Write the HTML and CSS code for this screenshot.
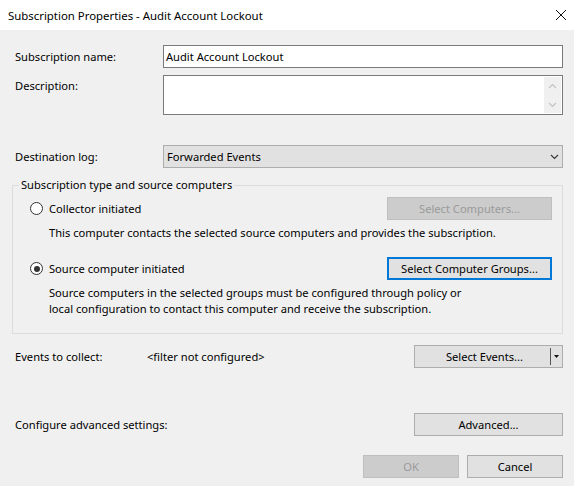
FILE: index.html
```html
<!DOCTYPE html>
<html>
<head>
<meta charset="utf-8">
<link rel="stylesheet" href="styles.css">
</head>
<body>
<div class="dialog">
  <div class="titlebar">
    <span class="title">Subscription Properties - Audit Account Lockout</span>
    <svg class="close" width="12" height="12" viewBox="0 0 12 12"><path d="M1 1 L11 11 M11 1 L1 11" stroke="#111" stroke-width="1" fill="none"/></svg>
  </div>
  <div class="content">
    <div class="row row-name">
      <span class="lbl">Subscription name:</span>
      <div class="textbox">Audit Account Lockout</div>
    </div>
    <div class="row row-desc">
      <span class="lbl">Description:</span>
      <div class="textarea">
        <div class="vscroll">
          <svg width="9" height="6" viewBox="0 0 9 6"><path d="M1 5 L4.5 1.5 L8 5" stroke="#c2c2c2" stroke-width="1.2" fill="none"/></svg>
          <svg width="9" height="6" viewBox="0 0 9 6"><path d="M1 1 L4.5 4.5 L8 1" stroke="#c2c2c2" stroke-width="1.2" fill="none"/></svg>
        </div>
      </div>
    </div>
    <div class="row row-dest">
      <span class="lbl">Destination log:</span>
      <div class="combo">
        <span>Forwarded Events</span>
        <svg width="9" height="6" viewBox="0 0 9 6"><path d="M1 1 L4.5 4.5 L8 1" stroke="#333" stroke-width="1.1" fill="none"/></svg>
      </div>
    </div>
    <fieldset class="group">
      <legend>Subscription type and source computers</legend>
      <div class="opt">
        <span class="radio"></span>
        <span class="opt-text">Collector initiated</span>
        <span class="btn disabled btn-wide">Select Computers...</span>
      </div>
      <p class="note">This computer contacts the selected source computers and provides the subscription.</p>
      <div class="opt opt-src">
        <span class="radio checked"></span>
        <span class="opt-text">Source computer initiated</span>
        <span class="btn focused btn-wide">Select Computer Groups...</span>
      </div>
      <p class="note">Source computers in the selected groups must be configured through policy or<br>local configuration to contact this computer and receive the subscription.</p>
    </fieldset>
    <div class="row row-events">
      <span class="lbl lbl-events">Events to collect:</span>
      <span class="filter">&lt;filter not configured&gt;</span>
      <span class="btn split">
        <span class="split-main">Select Events...</span>
        <span class="split-arrow"><svg width="5" height="3" viewBox="0 0 5 3"><path d="M0 0 H5 L2.5 3 Z" fill="#111"/></svg></span>
      </span>
    </div>
    <div class="row row-adv">
      <span class="lbl">Configure advanced settings:</span>
      <span class="btn btn-adv">Advanced...</span>
    </div>
    <div class="actions">
      <span class="btn disabled btn-small">OK</span>
      <span class="btn btn-small">Cancel</span>
    </div>
  </div>
</div>
</body>
</html>
```

FILE: styles.css
```css
* { box-sizing: border-box; }
html, body {
  margin: 0;
  padding: 0;
  width: 574px;
  height: 486px;
  overflow: hidden;
  background: #f0f0f0;
}
body {
  font-family: "Noto Sans", "Open Sans", sans-serif;
  font-size: 11.15px;
  color: #000;
}
.dialog {
  display: flex;
  flex-direction: column;
  width: 574px;
  height: 486px;
}
.titlebar {
  height: 30px;
  background: #fff;
  display: flex;
  align-items: center;
  justify-content: space-between;
  padding: 0 7px 0 8px;
  font-size: 11.4px;
}
.title { color: #000; }
.close { display: block; }
.content {
  flex: 1;
  padding: 15px 11px 0 15px;
  display: flex;
  flex-direction: column;
}
.row {
  display: flex;
  align-items: center;
}
.lbl {
  width: 148px;
  flex: none;
}
.textbox {
  flex: 1;
  height: 23px;
  border: 1px solid #7a7a7a;
  background: #fff;
  padding: 0 2px;
  display: flex;
  align-items: center;
}
.row-desc {
  margin-top: 7px;
  align-items: flex-start;
}
.row-desc .lbl { padding-top: 3px; }
.textarea {
  flex: 1;
  height: 40px;
  border: 1px solid #7a7a7a;
  background: #fff;
  display: flex;
  justify-content: flex-end;
  padding: 1px;
}
.vscroll {
  width: 17px;
  background: #f0f0f0;
  display: flex;
  flex-direction: column;
  justify-content: space-between;
  align-items: center;
  padding: 6px 0 5px;
}
.vscroll svg { display: block; }
.row-dest { margin-top: 30px; }
.combo {
  flex: 1;
  height: 23px;
  background: #e1e1e1;
  border: 1px solid #adadad;
  display: flex;
  align-items: center;
  justify-content: space-between;
  padding: 0 3px 0 3px;
}
.combo svg { display: block; }
.group {
  margin: 9px 0 0 -3px;
  padding: 4px 10px 16px 17px;
  border: 1px solid #dcdcdc;
  min-width: 0;
}
.group legend {
  padding: 0 2px;
  margin-left: -11px;
  line-height: 16px;
}
.opt {
  display: flex;
  align-items: center;
  height: 23px;
}
.opt-src { margin-top: 16px; }
.radio {
  width: 13px;
  height: 13px;
  border: 1px solid #333;
  border-radius: 50%;
  background: #fff;
  margin-right: 6px;
  display: flex;
  align-items: center;
  justify-content: center;
  flex: none;
}
.radio.checked::after {
  content: "";
  width: 6px;
  height: 6px;
  border-radius: 50%;
  background: #333;
}
.opt-text { flex: 1; }
.note {
  margin: 5px 0 0 19px;
  line-height: 16px;
}
.btn {
  height: 23px;
  background: #e1e1e1;
  border: 1px solid #adadad;
  display: flex;
  align-items: center;
  justify-content: center;
  flex: none;
}
.btn.disabled {
  background: #cccccc;
  border-color: #bfbfbf;
  color: #9a9a9a;
}
.btn.focused {
  border: 2px solid #0078d7;
}
.btn-wide { width: 165px; }
.row-events { margin-top: 11px; }
.lbl-events { width: 132px; }
.filter { flex: 1; }
.split {
  width: 149px;
  justify-content: flex-start;
}
.split-main {
  flex: 1;
  text-align: center;
  padding-left: 4px;
}
.split-arrow {
  width: 12px;
  height: 17px;
  border-left: 1px solid #555;
  display: flex;
  align-items: center;
  justify-content: center;
}
.split-arrow svg { display: block; }
.row-adv { margin-top: 45px; }
.row-adv .lbl { flex: 1; width: auto; }
.btn-adv { width: 149px; }
.actions {
  margin-top: 19px;
  display: flex;
  justify-content: flex-end;
  gap: 8px;
}
.btn-small { width: 96px; }
```
